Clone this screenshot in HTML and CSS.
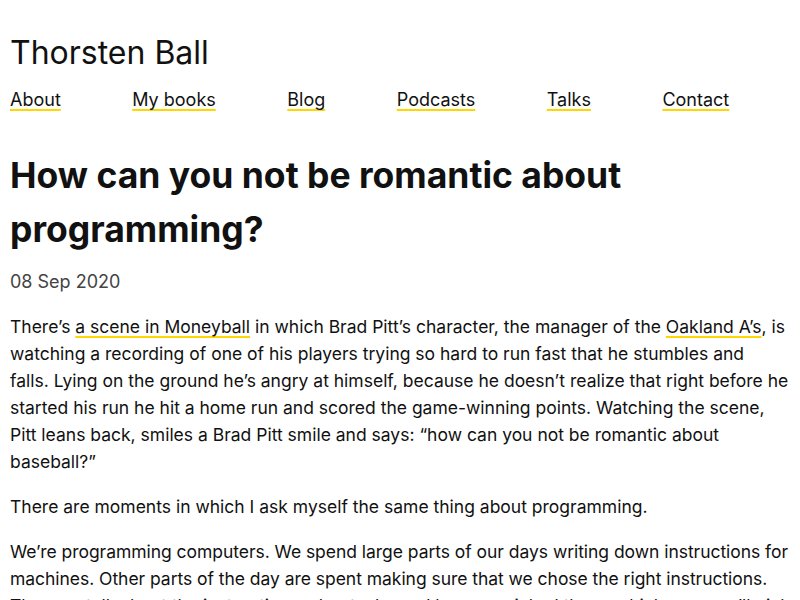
FILE: index.html
```html
<!DOCTYPE html>
<html lang="en">
<head>
<meta charset="utf-8">
<title>How can you not be romantic about programming? - Thorsten Ball</title>
<link rel="stylesheet" href="styles.css">
</head>
<body>
<div class="page">
  <header class="site-header">
    <div class="site-title">Thorsten Ball</div>
    <nav class="site-nav">
      <a href="#">About</a>
      <a href="#">My books</a>
      <a href="#">Blog</a>
      <a href="#">Podcasts</a>
      <a href="#">Talks</a>
      <a href="#">Contact</a>
    </nav>
  </header>
  <article class="post">
    <h1 class="post-title">How can you not be romantic about programming?</h1>
    <div class="post-date">08 Sep 2020</div>
    <p>There’s <a href="#">a scene in Moneyball</a> in which Brad Pitt’s character, the manager of the <a href="#">Oakland A’s</a>, is watching a recording of one of his players trying so hard to run fast that he stumbles and<br>falls. Lying on the ground he’s angry at himself, because he doesn’t realize that right before he started his run he hit a home run and scored the game-winning points. Watching the scene, Pitt leans back, smiles a Brad Pitt smile and says: “how can you not be romantic about baseball?”</p>
    <p>There are moments in which I ask myself the same thing about programming.</p>
    <p class="tight">We’re programming computers. We spend large parts of our days writing down instructions for machines. Other parts of the day are spent making sure that we chose the right instructions. Then we talk about the instructions, about why and how we picked them, which ones we’ll pick next and how we could improve them.</p>
  </article>
</div>
</body>
</html>
```
FILE: styles.css
```css
html, body {
  margin: 0;
  padding: 0;
  background: #fff;
}
body {
  font-family: Inter, "Noto Sans", sans-serif;
  font-size: 18px;
  line-height: 27px;
  color: #111;
}
.page {
  padding: 0 10px;
}
.site-title {
  font-size: 32px;
  line-height: 48px;
  margin-top: 29px;
  color: #111;
}
.site-nav {
  display: flex;
  gap: 71.5px;
  margin-top: 9px;
}
a {
  color: #111;
  text-decoration: underline;
  text-decoration-color: #ffd700;
  text-decoration-thickness: 2px;
  text-underline-offset: 3px;
  text-decoration-skip-ink: none;
}
.post-title {
  font-size: 35.5px;
  line-height: 54px;
  font-weight: 700;
  margin: 36px 0 0;
}
.post-date {
  color: #444;
  margin-top: 11px;
}
.post p {
  font-size: 17.5px;
  margin: 18px 0 0;
}
.post p.tight {
  letter-spacing: -0.04px;
}
```
